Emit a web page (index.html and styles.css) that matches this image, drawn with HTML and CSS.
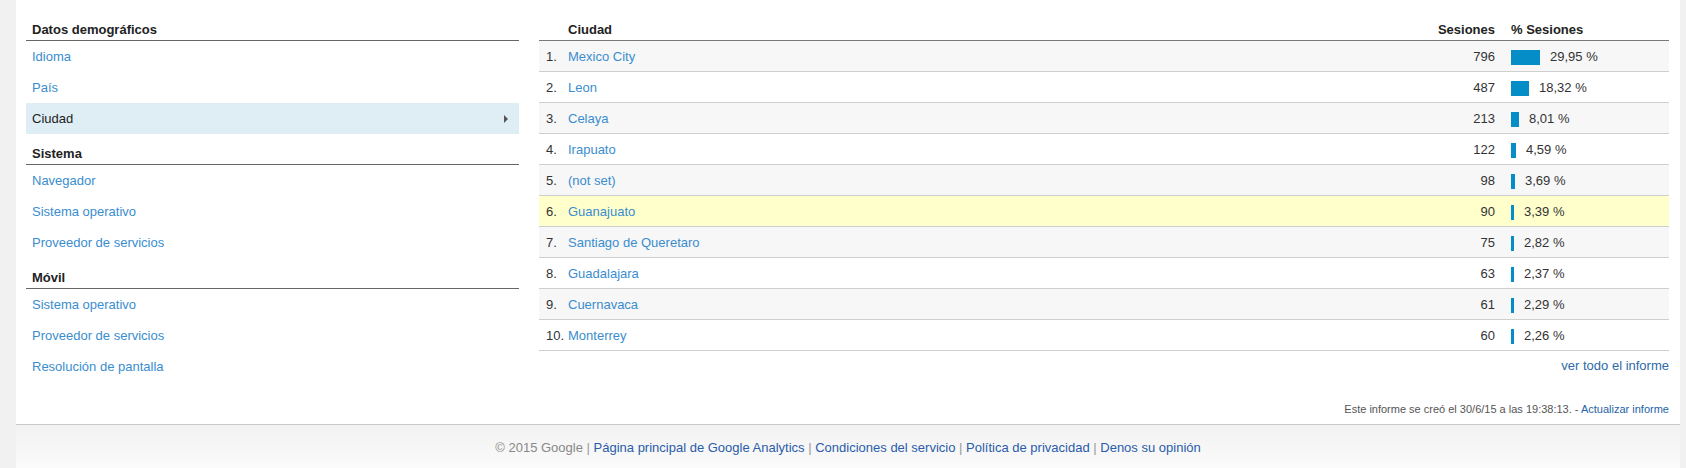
FILE: index.html
```html
<!DOCTYPE html>
<html lang="es">
<head>
<meta charset="utf-8">
<title>Ciudad - Sesiones</title>
<link rel="stylesheet" href="styles.css">
</head>
<body>
<div class="page">
  <div class="main">
    <div class="content">
      <nav class="dims">
        <div class="dim-head">Datos demográficos</div>
        <a class="dim">Idioma</a>
        <a class="dim">País</a>
        <div class="dim selected"><span>Ciudad</span><span class="arrow"></span></div>
        <div class="dim-head">Sistema</div>
        <a class="dim">Navegador</a>
        <a class="dim">Sistema operativo</a>
        <a class="dim">Proveedor de servicios</a>
        <div class="dim-head">Móvil</div>
        <a class="dim">Sistema operativo</a>
        <a class="dim">Proveedor de servicios</a>
        <a class="dim">Resolución de pantalla</a>
      </nav>
      <section class="report">
        <div class="trow thead">
          <span></span><span>Ciudad</span><span class="sess">Sesiones</span><span class="pct">% Sesiones</span>
        </div>
        <div class="trow odd"><span class="idx">1.</span><a class="city">Mexico City</a><span class="sess">796</span><span class="pct"><i class="bar" style="width:29px"></i>29,95 %</span></div>
        <div class="trow"><span class="idx">2.</span><a class="city">Leon</a><span class="sess">487</span><span class="pct"><i class="bar" style="width:18px"></i>18,32 %</span></div>
        <div class="trow odd"><span class="idx">3.</span><a class="city">Celaya</a><span class="sess">213</span><span class="pct"><i class="bar" style="width:8px"></i>8,01 %</span></div>
        <div class="trow"><span class="idx">4.</span><a class="city">Irapuato</a><span class="sess">122</span><span class="pct"><i class="bar" style="width:5px"></i>4,59 %</span></div>
        <div class="trow odd"><span class="idx">5.</span><a class="city">(not set)</a><span class="sess">98</span><span class="pct"><i class="bar" style="width:4px"></i>3,69 %</span></div>
        <div class="trow hl"><span class="idx">6.</span><a class="city">Guanajuato</a><span class="sess">90</span><span class="pct"><i class="bar" style="width:3px"></i>3,39 %</span></div>
        <div class="trow odd"><span class="idx">7.</span><a class="city">Santiago de Queretaro</a><span class="sess">75</span><span class="pct"><i class="bar" style="width:3px"></i>2,82 %</span></div>
        <div class="trow"><span class="idx">8.</span><a class="city">Guadalajara</a><span class="sess">63</span><span class="pct"><i class="bar" style="width:3px"></i>2,37 %</span></div>
        <div class="trow odd"><span class="idx">9.</span><a class="city">Cuernavaca</a><span class="sess">61</span><span class="pct"><i class="bar" style="width:3px"></i>2,29 %</span></div>
        <div class="trow"><span class="idx">10.</span><a class="city">Monterrey</a><span class="sess">60</span><span class="pct"><i class="bar" style="width:3px"></i>2,26 %</span></div>
        <div class="more"><a>ver todo el informe</a></div>
      </section>
    </div>
    <div class="stamp">Este informe se creó el 30/6/15 a las 19:38:13. - <a>Actualizar informe</a></div>
  </div>
  <footer class="footer">
    <span class="muted">© 2015 Google</span> <span class="sep">|</span> <a>Página principal de Google Analytics</a> <span class="sep">|</span> <a>Condiciones del servicio</a> <span class="sep">|</span> <a>Política de privacidad</a> <span class="sep">|</span> <a>Denos su opinión</a>
  </footer>
</div>
</body>
</html>
```

FILE: styles.css
```css
html, body {
  margin: 0;
  padding: 0;
}
body {
  background: #f1f1f1;
  font-family: "Liberation Sans", Arial, sans-serif;
  font-size: 13px;
  color: #333;
}
a {
  cursor: pointer;
}
.page {
  margin: 0 6px 0 16px;
  min-height: 468px;
  display: flex;
  flex-direction: column;
}
.main {
  background: #fff;
  padding: 10px 11px 8px 10px;
}
.content {
  display: flex;
  gap: 20px;
}
.dims {
  width: 493px;
  display: flex;
  flex-direction: column;
}
.dim-head {
  padding: 12px 0 2px 6px;
  line-height: 16px;
  font-weight: bold;
  color: #222;
  border-bottom: 1px solid #666;
}
.dim {
  display: flex;
  justify-content: space-between;
  align-items: center;
  height: 31px;
  line-height: 31px;
  padding: 0 11px 0 6px;
  color: #3a8dcf;
}
.dim.selected {
  background: #dfedf5;
  color: #222;
}
.arrow {
  width: 0;
  height: 0;
  border-left: 4px solid #555;
  border-top: 4px solid transparent;
  border-bottom: 4px solid transparent;
}
.report {
  flex: 1;
  display: flex;
  flex-direction: column;
}
.trow {
  display: grid;
  grid-template-columns: 22px 1fr 116px 158px;
  padding: 2px 0 0 7px;
  height: 28px;
  line-height: 28px;
  border-bottom: 1px solid #cfcfcf;
  background: #fff;
}
.trow.odd {
  background: #f7f7f7;
}
.trow.hl {
  background: #ffffcc;
}
.trow.thead {
  height: auto;
  padding-top: 12px;
  padding-bottom: 2px;
  line-height: 16px;
  font-weight: bold;
  color: #222;
  border-bottom: 1px solid #7a7a7a;
  background: #fff;
}
.idx {
  color: #333;
}
.city {
  color: #3a8dcf;
}
.sess {
  text-align: right;
  padding-right: 16px;
}
.pct {
  display: flex;
  align-items: center;
  gap: 10px;
}
.bar {
  display: block;
  height: 15px;
  background: #058dc7;
}
.more {
  margin-top: 7px;
  line-height: 16px;
  text-align: right;
}
.more a {
  color: #2e6aa8;
}
.stamp {
  margin-top: 20px;
  font-size: 11px;
  line-height: 14px;
  text-align: right;
  color: #555;
}
.stamp a {
  color: #2563a8;
}
.footer {
  flex: 1;
  border-top: 1px solid #c8c8c8;
  background: linear-gradient(#f2f2f2, #fcfcfc);
  padding: 15px 0 20px;
  line-height: 16px;
  text-align: center;
}
.footer .muted {
  color: #888;
}
.footer .sep {
  color: #999;
}
.footer a {
  color: #2a5caa;
}
```
